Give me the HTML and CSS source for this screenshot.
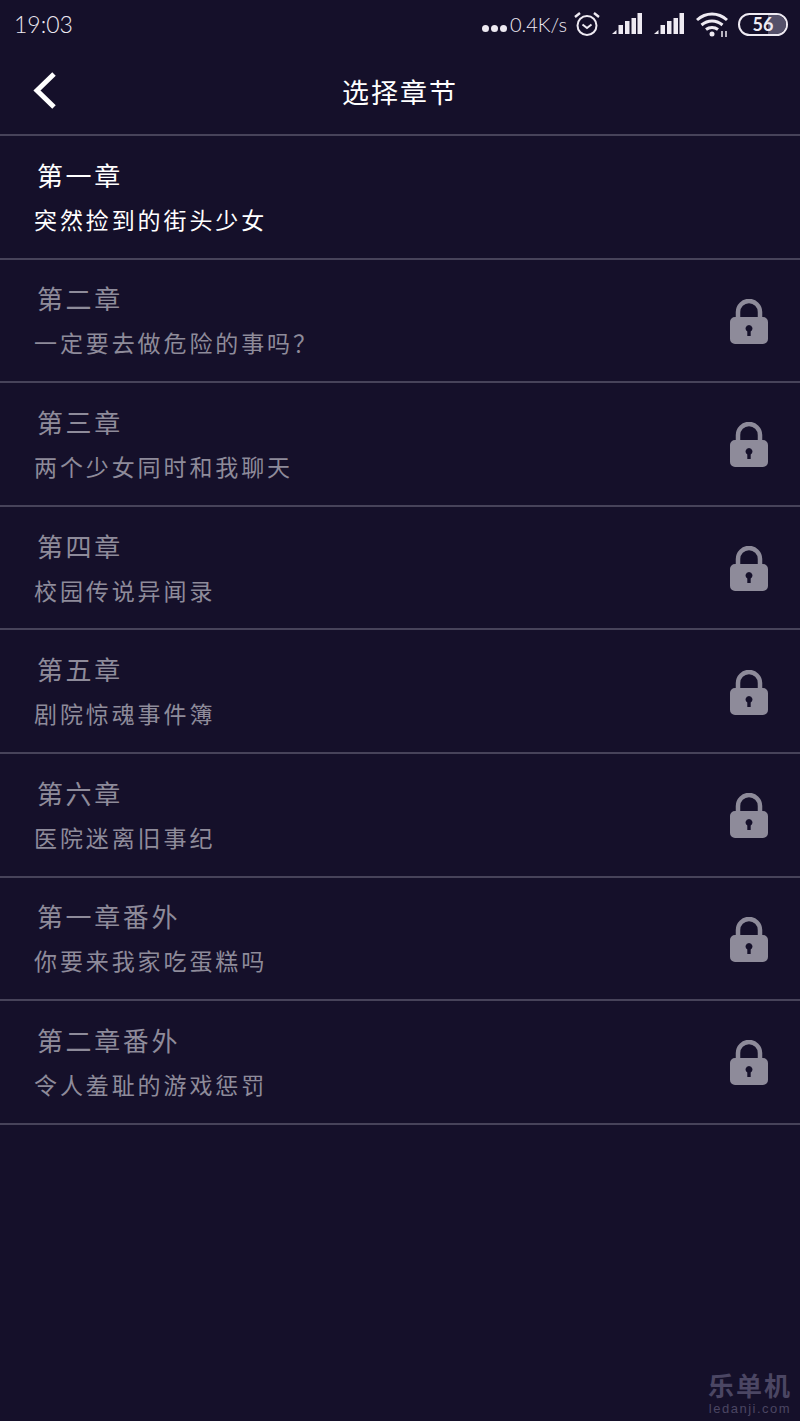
FILE: index.html
```html
<!DOCTYPE html>
<html lang="zh">
<head>
<meta charset="utf-8">
<title>选择章节</title>
<link rel="stylesheet" href="styles.css">
</head>
<body>
<div class="screen">
  <div class="status">
    <span class="time">19:03</span>
    <div class="status-right">
      <span class="dots"><i></i><i></i><i></i></span>
      <span class="speed">0.4K/s</span>
      <svg class="alarm" viewBox="0 0 28 28" width="28" height="28"><circle cx="14" cy="15.5" r="9.5" fill="none" stroke="#eeeaf2" stroke-width="2"/><path d="M9.5 14.5l4.5 3.5 4.500-3.500" fill="none" stroke="#eeeaf2" stroke-width="2"/><path d="M2 7l5-4M26 7l-5-4" stroke="#eeeaf2" stroke-width="2.4" fill="none"/></svg>
      <svg class="signal" viewBox="0 0 30 22" width="30" height="22"><path d="M0 21h4.500v-4zM6.500 21H11V12H6.500zM13 21h4.500V8H13zM19.500 21H24V5h-4.500zM25.500 21H30V0h-4.500z" fill="#eeeaf2"/></svg>
      <svg class="signal" viewBox="0 0 30 22" width="30" height="22"><path d="M0 21h4.500v-4zM6.500 21H11V12H6.500zM13 21h4.500V8H13zM19.500 21H24V5h-4.500zM25.500 21H30V0h-4.500z" fill="#eeeaf2"/></svg>
      <svg class="wifi" viewBox="0 0 34 26" width="34" height="26"><path d="M2 9c9-8 21-8 30 0M6.500 14c6.500-5.500 14.500-5.500 21 0M11 18.500c3.500-2.800 8.500-2.800 12 0" fill="none" stroke="#eeeaf2" stroke-width="3"/><circle cx="17" cy="23" r="2.500" fill="#eeeaf2"/><path d="M27 20v6M31 20v6" stroke="#eeeaf2" stroke-width="1.500"/></svg>
      <span class="battery"><span class="battery-fill"></span><span class="battery-num">56</span></span>
    </div>
  </div>
  <header class="nav">
    <svg class="back" viewBox="0 0 26 40" width="26" height="40"><path d="M22 3L5 19.500 22 36" fill="none" stroke="#fff" stroke-width="5"/></svg>
    <h1 class="nav-title">选择章节</h1>
  </header>
  <ul class="list">
    <li class="row row-open"><div class="row-text"><div class="chapter">第一章</div><div class="desc">突然捡到的街头少女</div></div></li>
    <li class="row"><div class="row-text"><div class="chapter">第二章</div><div class="desc">一定要去做危险的事吗？</div></div><svg class="lock" viewBox="0 0 40 46"><path d="M9 20V13a11 11 0 0 1 22 0v7" fill="none" stroke="#8e8b9a" stroke-width="4.500"/><path fill-rule="evenodd" d="M6 18h28a5 5 0 0 1 5 5v17a5 5 0 0 1-5 5H6a5 5 0 0 1-5-5V23a5 5 0 0 1 5-5zM20 26a3.500 3.500 0 0 0-1.700 6.500V37h3.400v-4.500A3.500 3.500 0 0 0 20 26z" fill="#8e8b9a"/></svg></li>
    <li class="row"><div class="row-text"><div class="chapter">第三章</div><div class="desc">两个少女同时和我聊天</div></div><svg class="lock" viewBox="0 0 40 46"><path d="M9 20V13a11 11 0 0 1 22 0v7" fill="none" stroke="#8e8b9a" stroke-width="4.500"/><path fill-rule="evenodd" d="M6 18h28a5 5 0 0 1 5 5v17a5 5 0 0 1-5 5H6a5 5 0 0 1-5-5V23a5 5 0 0 1 5-5zM20 26a3.500 3.500 0 0 0-1.700 6.500V37h3.400v-4.500A3.500 3.500 0 0 0 20 26z" fill="#8e8b9a"/></svg></li>
    <li class="row"><div class="row-text"><div class="chapter">第四章</div><div class="desc">校园传说异闻录</div></div><svg class="lock" viewBox="0 0 40 46"><path d="M9 20V13a11 11 0 0 1 22 0v7" fill="none" stroke="#8e8b9a" stroke-width="4.500"/><path fill-rule="evenodd" d="M6 18h28a5 5 0 0 1 5 5v17a5 5 0 0 1-5 5H6a5 5 0 0 1-5-5V23a5 5 0 0 1 5-5zM20 26a3.500 3.500 0 0 0-1.700 6.500V37h3.400v-4.500A3.500 3.500 0 0 0 20 26z" fill="#8e8b9a"/></svg></li>
    <li class="row"><div class="row-text"><div class="chapter">第五章</div><div class="desc">剧院惊魂事件簿</div></div><svg class="lock" viewBox="0 0 40 46"><path d="M9 20V13a11 11 0 0 1 22 0v7" fill="none" stroke="#8e8b9a" stroke-width="4.500"/><path fill-rule="evenodd" d="M6 18h28a5 5 0 0 1 5 5v17a5 5 0 0 1-5 5H6a5 5 0 0 1-5-5V23a5 5 0 0 1 5-5zM20 26a3.500 3.500 0 0 0-1.700 6.500V37h3.400v-4.500A3.500 3.500 0 0 0 20 26z" fill="#8e8b9a"/></svg></li>
    <li class="row"><div class="row-text"><div class="chapter">第六章</div><div class="desc">医院迷离旧事纪</div></div><svg class="lock" viewBox="0 0 40 46"><path d="M9 20V13a11 11 0 0 1 22 0v7" fill="none" stroke="#8e8b9a" stroke-width="4.500"/><path fill-rule="evenodd" d="M6 18h28a5 5 0 0 1 5 5v17a5 5 0 0 1-5 5H6a5 5 0 0 1-5-5V23a5 5 0 0 1 5-5zM20 26a3.500 3.500 0 0 0-1.700 6.500V37h3.400v-4.500A3.500 3.500 0 0 0 20 26z" fill="#8e8b9a"/></svg></li>
    <li class="row"><div class="row-text"><div class="chapter">第一章番外</div><div class="desc">你要来我家吃蛋糕吗</div></div><svg class="lock" viewBox="0 0 40 46"><path d="M9 20V13a11 11 0 0 1 22 0v7" fill="none" stroke="#8e8b9a" stroke-width="4.500"/><path fill-rule="evenodd" d="M6 18h28a5 5 0 0 1 5 5v17a5 5 0 0 1-5 5H6a5 5 0 0 1-5-5V23a5 5 0 0 1 5-5zM20 26a3.500 3.500 0 0 0-1.700 6.500V37h3.400v-4.500A3.500 3.500 0 0 0 20 26z" fill="#8e8b9a"/></svg></li>
    <li class="row"><div class="row-text"><div class="chapter">第二章番外</div><div class="desc">令人羞耻的游戏惩罚</div></div><svg class="lock" viewBox="0 0 40 46"><path d="M9 20V13a11 11 0 0 1 22 0v7" fill="none" stroke="#8e8b9a" stroke-width="4.500"/><path fill-rule="evenodd" d="M6 18h28a5 5 0 0 1 5 5v17a5 5 0 0 1-5 5H6a5 5 0 0 1-5-5V23a5 5 0 0 1 5-5zM20 26a3.500 3.500 0 0 0-1.700 6.500V37h3.400v-4.500A3.500 3.500 0 0 0 20 26z" fill="#8e8b9a"/></svg></li>
  </ul>
  <div class="watermark"><div class="wm-cn">乐单机</div><div class="wm-en">ledanji.com</div></div>
</div>
</body>
</html>
```
FILE: styles.css
```css
* { box-sizing: border-box; }
html, body { margin: 0; padding: 0; }
body {
  background: #15102a;
  font-family: "Noto Sans CJK SC", "Noto Sans", sans-serif;
}
.screen {
  position: relative;
  width: 800px;
  height: 1421px;
  overflow: hidden;
  background: #15102a;
}
.status {
  height: 50px;
  display: flex;
  align-items: center;
  justify-content: space-between;
  padding: 0 12px 0 14px;
  color: #eeeaf2;
}
.time {
  font-family: "Lato", sans-serif;
  font-size: 23px;
  font-weight: 300;
  margin-top: -2px;
}
.status-right { display: flex; align-items: center; margin-top: -2px; }
.dots { display: flex; gap: 2px; margin-top: 9px; margin-right: 3px; }
.dots i { width: 7px; height: 7px; border-radius: 50%; background: #eeeaf2; display: block; }
.speed { font-family: "Lato", sans-serif; font-size: 20px; font-weight: 300; margin-right: 6px; }
.alarm { margin-right: 11px; }
.signal { margin-right: 12px; }
.wifi { margin-right: 9px; margin-left: -1px; }
.battery {
  position: relative;
  width: 50px;
  height: 23px;
  border: 2px solid #eeeaf2;
  border-radius: 12px;
  display: flex;
  align-items: center;
  justify-content: center;
  overflow: hidden;
}
.battery-fill { position: absolute; right: 0; top: 0; bottom: 0; width: 40%; background: #55516a; }
.battery-num { position: relative; font-family: "Lato", sans-serif; font-size: 18px; font-weight: 700; line-height: 1; }
.nav {
  position: relative;
  height: 86px;
  border-bottom: 2px solid #47435a;
  display: flex;
  align-items: center;
  justify-content: center;
}
.back { position: absolute; left: 32px; top: 21px; }
.nav-title {
  margin: 0;
  color: #fff;
  font-size: 27px;
  font-weight: 400;
  letter-spacing: 2px;
  margin-top: -2px;
}
.list { list-style: none; margin: 0; padding: 0; }
.row {
  height: 123.6px;
  border-bottom: 2px solid #47435a;
  display: flex;
  align-items: center;
  justify-content: space-between;
  padding: 0 31px 0 34px;
  color: #8e8b9a;
}
.row-open { color: #fff; }
.row-text { display: flex; flex-direction: column; gap: 10px; margin-top: -2px; }
.chapter { font-size: 26px; line-height: 36px; letter-spacing: 2.600px; padding-left: 3px; }
.desc { font-size: 23px; line-height: 32px; letter-spacing: 2.900px; }
.lock { width: 40px; height: 46px; flex: none; margin-top: 3px; }
.watermark {
  position: absolute;
  right: 8px;
  bottom: 5px;
  color: #4b4663;
  text-align: center;
}
.wm-cn { font-size: 26px; font-weight: 700; letter-spacing: 2px; line-height: 26px; }
.wm-en { font-family: "Liberation Sans", sans-serif; font-size: 13px; letter-spacing: 1.500px; line-height: 15px; margin-top: 3px; }
```
